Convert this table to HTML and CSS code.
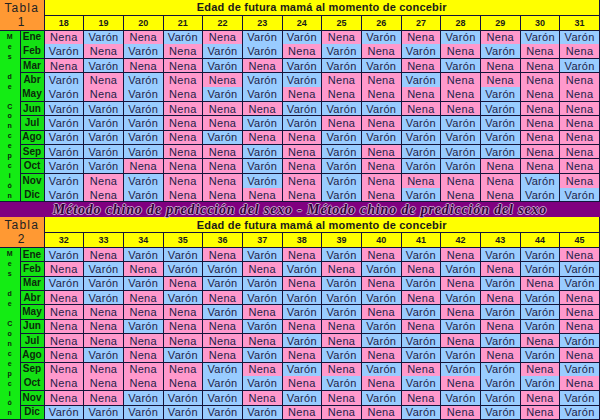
FILE: index.html
```html
<!DOCTYPE html>
<html lang="es">
<head>
<meta charset="utf-8">
<title>Método chino de predicción del sexo</title>
<link rel="stylesheet" href="styles.css">
</head>
<body>
<table class="chart">
<colgroup><col class="c-mes"><col class="c-mon"><col span="14"></colgroup>
<tr class="h1"><th class="tabla" colspan="2" rowspan="2">Tabla<br>1</th><th class="edad" colspan="14">Edad de futura mamá al momento de concebir</th></tr>
<tr class="h2"><th>18</th><th>19</th><th>20</th><th>21</th><th>22</th><th>23</th><th>24</th><th>25</th><th>26</th><th>27</th><th>28</th><th>29</th><th>30</th><th>31</th></tr>
<tr class="r j"><td class="mes" rowspan="12"><div class="mes-col"><span>M</span><span>e</span><span>s</span><span></span><span>d</span><span>e</span><span></span><span>C</span><span>o</span><span>n</span><span>c</span><span>e</span><span>p</span><span>c</span><span>i</span><span>ó</span><span>n</span></div></td><th class="mon">Ene</th><td class="n">Nena</td><td class="v">Varón</td><td class="n">Nena</td><td class="v">Varón</td><td class="n">Nena</td><td class="v">Varón</td><td class="v">Varón</td><td class="n">Nena</td><td class="v">Varón</td><td class="n">Nena</td><td class="v">Varón</td><td class="n">Nena</td><td class="v">Varón</td><td class="v">Varón</td></tr>
<tr class="r"><th class="mon">Feb</th><td class="v">Varón</td><td class="n">Nena</td><td class="v">Varón</td><td class="n">Nena</td><td class="v">Varón</td><td class="v">Varón</td><td class="n">Nena</td><td class="v">Varón</td><td class="n">Nena</td><td class="v">Varón</td><td class="n">Nena</td><td class="v">Varón</td><td class="n">Nena</td><td class="n">Nena</td></tr>
<tr class="r"><th class="mon">Mar</th><td class="n">Nena</td><td class="v">Varón</td><td class="n">Nena</td><td class="n">Nena</td><td class="v">Varón</td><td class="n">Nena</td><td class="v">Varón</td><td class="v">Varón</td><td class="v">Varón</td><td class="n">Nena</td><td class="v">Varón</td><td class="n">Nena</td><td class="n">Nena</td><td class="v">Varón</td></tr>
<tr class="r j"><th class="mon">Abr</th><td class="v">Varón</td><td class="n">Nena</td><td class="v">Varón</td><td class="n">Nena</td><td class="n">Nena</td><td class="v">Varón</td><td class="v">Varón</td><td class="n">Nena</td><td class="n">Nena</td><td class="v">Varón</td><td class="n">Nena</td><td class="n">Nena</td><td class="n">Nena</td><td class="n">Nena</td></tr>
<tr class="r"><th class="mon">May</th><td class="v">Varón</td><td class="n">Nena</td><td class="v">Varón</td><td class="n">Nena</td><td class="v">Varón</td><td class="v">Varón</td><td class="n">Nena</td><td class="n">Nena</td><td class="n">Nena</td><td class="n">Nena</td><td class="n">Nena</td><td class="v">Varón</td><td class="n">Nena</td><td class="n">Nena</td></tr>
<tr class="r"><th class="mon">Jun</th><td class="v">Varón</td><td class="v">Varón</td><td class="v">Varón</td><td class="n">Nena</td><td class="n">Nena</td><td class="n">Nena</td><td class="v">Varón</td><td class="v">Varón</td><td class="v">Varón</td><td class="n">Nena</td><td class="n">Nena</td><td class="v">Varón</td><td class="n">Nena</td><td class="n">Nena</td></tr>
<tr class="r"><th class="mon">Jul</th><td class="v">Varón</td><td class="v">Varón</td><td class="v">Varón</td><td class="n">Nena</td><td class="n">Nena</td><td class="v">Varón</td><td class="v">Varón</td><td class="n">Nena</td><td class="n">Nena</td><td class="v">Varón</td><td class="v">Varón</td><td class="v">Varón</td><td class="n">Nena</td><td class="n">Nena</td></tr>
<tr class="r"><th class="mon">Ago</th><td class="v">Varón</td><td class="v">Varón</td><td class="v">Varón</td><td class="n">Nena</td><td class="v">Varón</td><td class="n">Nena</td><td class="n">Nena</td><td class="v">Varón</td><td class="v">Varón</td><td class="v">Varón</td><td class="v">Varón</td><td class="v">Varón</td><td class="n">Nena</td><td class="n">Nena</td></tr>
<tr class="r"><th class="mon">Sep</th><td class="v">Varón</td><td class="v">Varón</td><td class="v">Varón</td><td class="n">Nena</td><td class="n">Nena</td><td class="v">Varón</td><td class="n">Nena</td><td class="v">Varón</td><td class="n">Nena</td><td class="v">Varón</td><td class="v">Varón</td><td class="v">Varón</td><td class="n">Nena</td><td class="n">Nena</td></tr>
<tr class="r"><th class="mon">Oct</th><td class="v">Varón</td><td class="v">Varón</td><td class="n">Nena</td><td class="n">Nena</td><td class="n">Nena</td><td class="v">Varón</td><td class="n">Nena</td><td class="v">Varón</td><td class="n">Nena</td><td class="v">Varón</td><td class="v">Varón</td><td class="n">Nena</td><td class="n">Nena</td><td class="n">Nena</td></tr>
<tr class="r j"><th class="mon">Nov</th><td class="v">Varón</td><td class="n">Nena</td><td class="v">Varón</td><td class="n">Nena</td><td class="n">Nena</td><td class="v">Varón</td><td class="n">Nena</td><td class="v">Varón</td><td class="n">Nena</td><td class="n">Nena</td><td class="n">Nena</td><td class="n">Nena</td><td class="v">Varón</td><td class="n">Nena</td></tr>
<tr class="r"><th class="mon">Dic</th><td class="v">Varón</td><td class="n">Nena</td><td class="v">Varón</td><td class="n">Nena</td><td class="n">Nena</td><td class="n">Nena</td><td class="n">Nena</td><td class="v">Varón</td><td class="n">Nena</td><td class="v">Varón</td><td class="n">Nena</td><td class="n">Nena</td><td class="v">Varón</td><td class="v">Varón</td></tr>
</table>
<div class="banner">Método chino de predicción del sexo - Método chino de predicción del sexo</div>
<table class="chart">
<colgroup><col class="c-mes"><col class="c-mon"><col span="14"></colgroup>
<tr class="h1"><th class="tabla" colspan="2" rowspan="2">Tabla<br>2</th><th class="edad" colspan="14">Edad de futura mamá al momento de concebir</th></tr>
<tr class="h2"><th>32</th><th>33</th><th>34</th><th>35</th><th>36</th><th>37</th><th>38</th><th>39</th><th>40</th><th>41</th><th>42</th><th>43</th><th>44</th><th>45</th></tr>
<tr class="r"><td class="mes" rowspan="12"><div class="mes-col"><span>M</span><span>e</span><span>s</span><span></span><span>d</span><span>e</span><span></span><span>C</span><span>o</span><span>n</span><span>c</span><span>e</span><span>p</span><span>c</span><span>i</span><span>ó</span><span>n</span></div></td><th class="mon">Ene</th><td class="v">Varón</td><td class="n">Nena</td><td class="v">Varón</td><td class="v">Varón</td><td class="n">Nena</td><td class="v">Varón</td><td class="n">Nena</td><td class="v">Varón</td><td class="n">Nena</td><td class="v">Varón</td><td class="n">Nena</td><td class="v">Varón</td><td class="v">Varón</td><td class="n">Nena</td></tr>
<tr class="r"><th class="mon">Feb</th><td class="n">Nena</td><td class="v">Varón</td><td class="n">Nena</td><td class="v">Varón</td><td class="v">Varón</td><td class="n">Nena</td><td class="v">Varón</td><td class="n">Nena</td><td class="v">Varón</td><td class="n">Nena</td><td class="v">Varón</td><td class="n">Nena</td><td class="v">Varón</td><td class="v">Varón</td></tr>
<tr class="r"><th class="mon">Mar</th><td class="v">Varón</td><td class="v">Varón</td><td class="v">Varón</td><td class="n">Nena</td><td class="v">Varón</td><td class="v">Varón</td><td class="n">Nena</td><td class="v">Varón</td><td class="n">Nena</td><td class="v">Varón</td><td class="n">Nena</td><td class="v">Varón</td><td class="n">Nena</td><td class="v">Varón</td></tr>
<tr class="r"><th class="mon">Abr</th><td class="n">Nena</td><td class="v">Varón</td><td class="n">Nena</td><td class="v">Varón</td><td class="n">Nena</td><td class="v">Varón</td><td class="v">Varón</td><td class="v">Varón</td><td class="v">Varón</td><td class="n">Nena</td><td class="v">Varón</td><td class="n">Nena</td><td class="v">Varón</td><td class="n">Nena</td></tr>
<tr class="r"><th class="mon">May</th><td class="n">Nena</td><td class="n">Nena</td><td class="n">Nena</td><td class="n">Nena</td><td class="v">Varón</td><td class="n">Nena</td><td class="v">Varón</td><td class="v">Varón</td><td class="n">Nena</td><td class="v">Varón</td><td class="n">Nena</td><td class="v">Varón</td><td class="v">Varón</td><td class="n">Nena</td></tr>
<tr class="r"><th class="mon">Jun</th><td class="n">Nena</td><td class="n">Nena</td><td class="v">Varón</td><td class="n">Nena</td><td class="n">Nena</td><td class="v">Varón</td><td class="n">Nena</td><td class="n">Nena</td><td class="v">Varón</td><td class="n">Nena</td><td class="v">Varón</td><td class="n">Nena</td><td class="v">Varón</td><td class="n">Nena</td></tr>
<tr class="r"><th class="mon">Jul</th><td class="n">Nena</td><td class="n">Nena</td><td class="n">Nena</td><td class="n">Nena</td><td class="n">Nena</td><td class="n">Nena</td><td class="v">Varón</td><td class="n">Nena</td><td class="v">Varón</td><td class="v">Varón</td><td class="n">Nena</td><td class="v">Varón</td><td class="n">Nena</td><td class="v">Varón</td></tr>
<tr class="r"><th class="mon">Ago</th><td class="n">Nena</td><td class="v">Varón</td><td class="n">Nena</td><td class="v">Varón</td><td class="n">Nena</td><td class="v">Varón</td><td class="n">Nena</td><td class="v">Varón</td><td class="n">Nena</td><td class="v">Varón</td><td class="v">Varón</td><td class="n">Nena</td><td class="v">Varón</td><td class="n">Nena</td></tr>
<tr class="r j"><th class="mon">Sep</th><td class="n">Nena</td><td class="n">Nena</td><td class="n">Nena</td><td class="n">Nena</td><td class="v">Varón</td><td class="n">Nena</td><td class="v">Varón</td><td class="n">Nena</td><td class="v">Varón</td><td class="n">Nena</td><td class="v">Varón</td><td class="v">Varón</td><td class="n">Nena</td><td class="v">Varón</td></tr>
<tr class="r"><th class="mon">Oct</th><td class="n">Nena</td><td class="n">Nena</td><td class="n">Nena</td><td class="n">Nena</td><td class="v">Varón</td><td class="v">Varón</td><td class="n">Nena</td><td class="v">Varón</td><td class="n">Nena</td><td class="v">Varón</td><td class="n">Nena</td><td class="v">Varón</td><td class="v">Varón</td><td class="n">Nena</td></tr>
<tr class="r"><th class="mon">Nov</th><td class="n">Nena</td><td class="n">Nena</td><td class="v">Varón</td><td class="v">Varón</td><td class="v">Varón</td><td class="n">Nena</td><td class="v">Varón</td><td class="n">Nena</td><td class="v">Varón</td><td class="n">Nena</td><td class="v">Varón</td><td class="v">Varón</td><td class="n">Nena</td><td class="v">Varón</td></tr>
<tr class="r"><th class="mon">Dic</th><td class="v">Varón</td><td class="v">Varón</td><td class="v">Varón</td><td class="v">Varón</td><td class="v">Varón</td><td class="v">Varón</td><td class="n">Nena</td><td class="n">Nena</td><td class="n">Nena</td><td class="v">Varón</td><td class="n">Nena</td><td class="v">Varón</td><td class="n">Nena</td><td class="v">Varón</td></tr>
</table>
</body>
</html>
```
FILE: styles.css
```css
html, body {
  margin: 0;
  padding: 0;
}
body {
  width: 600px;
  height: 420px;
  overflow: hidden;
  background: #ffffff;
  font-family: "Liberation Sans", Arial, sans-serif;
  color: #1e1e48;
}
.chart {
  width: 600px;
  border-collapse: collapse;
  table-layout: fixed;
}
.chart th,
.chart td {
  padding: 0;
  border: none;
  border-right: 1px solid #14143a;
  border-bottom: 1px solid #14143a;
  text-align: center;
  white-space: nowrap;
  overflow: hidden;
  font-size: 11px;
  line-height: 12px;
  font-weight: normal;
}
.c-mes { width: 20px; }
.c-mon { width: 24px; }
.h1, .h2 { height: 15px; }
.r { height: 14.33px; }
.chart .j td,
.chart .j th {
  border-bottom: none;
}
.chart .r td.mes {
  border-bottom: 1px solid #14143a;
  background: #14ec14;
  vertical-align: middle;
}
.mes-col {
  display: flex;
  flex-direction: column;
  justify-content: space-between;
  align-items: center;
  height: 168px;
  font-size: 7px;
  line-height: 9px;
  font-weight: bold;
  color: #0e2a0e;
}
.mes-col span {
  display: block;
  height: 9px;
}
.chart th.mon {
  background: #14e014;
  font-size: 10px;
  font-weight: bold;
  color: #0b2a0b;
}
.n {
  background: #ff99cc;
  letter-spacing: 0.3px;
}
.v {
  background: #99ccff;
  letter-spacing: 0.3px;
}
.chart th.tabla {
  background: #ff9933;
  font-size: 12px;
  line-height: 14px;
  letter-spacing: 1.2px;
  color: #222222;
}
.chart th.edad {
  background: #ffff00;
  font-weight: bold;
  font-size: 11px;
  letter-spacing: 0.2px;
  color: #1a1a1a;
}
.chart .h2 th {
  background: #ffff00;
  font-size: 9px;
  font-weight: bold;
  color: #1a1a1a;
}
.banner {
  height: 15px;
  background: #800080;
  display: flex;
  align-items: center;
  justify-content: center;
  font-family: "Liberation Serif", "Times New Roman", serif;
  font-style: italic;
  font-weight: bold;
  font-size: 14px;
  line-height: 15px;
  letter-spacing: 0.85px;
  color: #34003a;
  text-shadow: 1px 0 0 #c9a0d0, -1px 0 0 #c9a0d0, 0 1px 0 #c9a0d0, 0 -1px 0 #c9a0d0;
}
```
